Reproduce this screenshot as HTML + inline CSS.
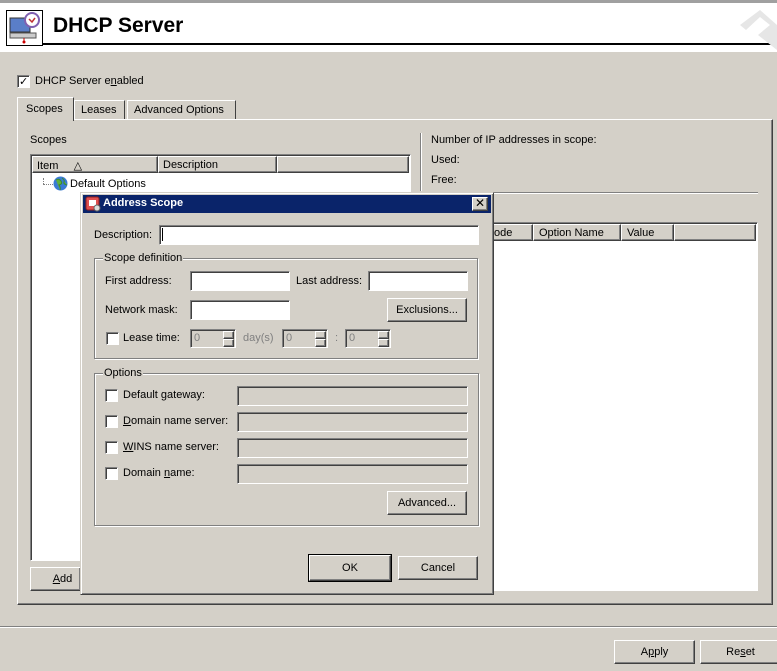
<!DOCTYPE html>
<html><head><meta charset="utf-8"><style>
*{box-sizing:border-box;margin:0;padding:0}
body{width:777px;height:671px;background:#d4d0c8;font-family:"Liberation Sans","DejaVu Sans",sans-serif;font-size:11px;color:#000;position:relative;overflow:hidden}
.a{position:absolute}
.in{background:#fff;border:1px solid;border-color:#808080 #fff #fff #808080;box-shadow:inset 1px 1px 0 #404040}
.dis{background:#d4d0c8}
.out{border:1px solid;border-color:#fff #404040 #404040 #fff;box-shadow:inset -1px -1px 0 #808080;background:#d4d0c8;text-align:center}
.grp{border:1px solid #808080;box-shadow:1px 1px 0 #fff, inset 1px 1px 0 #fff}
.lg{position:absolute;top:-7px;left:8px;background:#d4d0c8;padding:0 1px}
.cb{position:absolute;width:13px;height:13px;background:#fff;border:1px solid;border-color:#808080 #fff #fff #808080;box-shadow:inset 1px 1px 0 #404040}
.etch{border-top:1px solid #808080;border-bottom:1px solid #fff}
u{text-decoration:underline}
</style></head><body>
<!-- header -->
<div class="a" style="left:0;top:0;width:777px;height:3px;background:#a0a0a0"></div>
<div class="a" style="left:0;top:3px;width:777px;height:49px;background:#fff"></div>
<div class="a" style="left:42px;top:43px;width:733px;height:2px;background:#000"></div>
<div class="a" style="left:6px;top:10px;width:37px;height:36px;border:1px solid #000;background:#fff"></div>
<svg class="a" style="left:8px;top:12px" width="34" height="32"><rect x="2" y="6" width="20" height="14" fill="#5a7ec8" stroke="#333"/><rect x="2" y="21" width="26" height="5" fill="#ccc" stroke="#555"/><circle cx="24" cy="8" r="7" fill="#fff" stroke="#8060b0" stroke-width="2"/><path d="M21 7l3 3 3-4" stroke="#c03030" fill="none" stroke-width="1.5"/><line x1="16" y1="26" x2="16" y2="30" stroke="#c00"/><circle cx="16" cy="30" r="1.5" fill="#c00"/></svg>
<div class="a" style="left:53px;top:14px;font-size:21px;font-weight:bold">DHCP Server</div>
<svg class="a" style="left:740px;top:5px" width="37" height="45"><path d="M0 20L20 5 37 20 37 45 18 30 30 20 20 12 6 25z" fill="#e6e6e6"/></svg>
<!-- checkbox enabled -->
<div class="cb" style="left:17px;top:75px"></div>
<div class="a" style="left:19px;top:75px;font-size:11px;font-weight:bold">✓</div>
<div class="a" style="left:35px;top:75px">DHCP Server e<u>n</u>abled</div>
<!-- tabs -->
<div class="a" style="left:17px;top:119px;width:756px;height:486px;border:1px solid;border-color:#fff #404040 #404040 #fff;box-shadow:inset -1px -1px 0 #808080"></div>
<div class="a" style="left:17px;top:97px;width:57px;height:24px;border:1px solid;border-color:#fff #404040 transparent #fff;border-bottom:none;background:#d4d0c8;padding:5px 0 0 8px">Scopes</div>
<div class="a" style="left:74px;top:100px;width:51px;height:19px;border:1px solid;border-color:#fff #404040 transparent #fff;border-bottom:none;padding:3px 0 0 6px">Leases</div>
<div class="a" style="left:127px;top:100px;width:109px;height:19px;border:1px solid;border-color:#fff #404040 transparent #fff;border-bottom:none;padding:3px 0 0 6px">Advanced Options</div>
<div class="a" style="left:30px;top:134px">Scopes</div>
<div class="a in" style="left:30px;top:154px;width:381px;height:407px"></div>
<div class="a out" style="left:32px;top:156px;width:126px;height:17px;text-align:left;padding:2px 0 0 4px">Item &nbsp;&nbsp;&nbsp;&nbsp;&#9651;</div>
<div class="a out" style="left:158px;top:156px;width:119px;height:17px;text-align:left;padding:2px 0 0 4px">Description</div>
<div class="a out" style="left:277px;top:156px;width:132px;height:17px"></div>
<div class="a" style="left:43px;top:178px;width:1px;height:6px;border-left:1px dotted #808080"></div>
<div class="a" style="left:43px;top:184px;width:10px;border-top:1px dotted #808080"></div>
<svg class="a" style="left:53px;top:176px" width="15" height="15"><circle cx="7.5" cy="7.5" r="7" fill="#3a7bd5"/><path d="M3 4q3-2 5 1t-2 4q2 3 1 5M9 2q3 2 2 4t3 3" fill="#5fb040" stroke="#3a8a30"/></svg>
<div class="a" style="left:70px;top:178px">Default Options</div>
<div class="a out" style="left:30px;top:567px;width:51px;height:24px;padding-top:5px;padding-left:14px"><u>A</u>dd</div>
<!-- right side -->
<div class="a" style="left:420px;top:133px;width:2px;height:58px;border-left:1px solid #808080;border-right:1px solid #fff"></div>
<div class="a" style="left:431px;top:134px">Number of IP addresses in scope:</div>
<div class="a" style="left:431px;top:154px">Used:</div>
<div class="a" style="left:431px;top:174px">Free:</div>
<div class="a etch" style="left:425px;top:192px;width:333px;height:2px"></div>
<div class="a in" style="left:480px;top:222px;width:278px;height:369px"></div>
<div class="a out" style="left:482px;top:224px;width:51px;height:17px;text-align:left;padding:2px 0 0 11px">ode</div>
<div class="a out" style="left:533px;top:224px;width:88px;height:17px;text-align:left;padding:2px 0 0 5px">Option Name</div>
<div class="a out" style="left:621px;top:224px;width:53px;height:17px;text-align:left;padding:2px 0 0 5px">Value</div>
<div class="a out" style="left:674px;top:224px;width:82px;height:17px"></div>
<!-- bottom -->
<div class="a etch" style="left:0;top:626px;width:777px;height:2px"></div>
<div class="a out" style="left:614px;top:640px;width:81px;height:24px;padding-top:5px">A<u>p</u>ply</div>
<div class="a out" style="left:700px;top:640px;width:81px;height:24px;padding-top:5px">Re<u>s</u>et</div>
<!-- dialog -->
<div class="a" style="left:80px;top:192px;width:414px;height:403px;border:1px solid;border-color:#d4d0c8 #404040 #404040 #d4d0c8;box-shadow:inset 1px 1px 0 #fff,inset -1px -1px 0 #808080;background:#d4d0c8"></div>
<div class="a" style="left:83px;top:195px;width:408px;height:18px;background:#0a246a"></div>
<svg class="a" style="left:85px;top:196px" width="16" height="16"><rect x="1" y="1" width="13" height="13" rx="2" fill="#e05050" stroke="#902020"/><rect x="4" y="4" width="7" height="6" fill="#fff"/><circle cx="12" cy="12" r="3" fill="#ddd" stroke="#666"/></svg>
<div class="a" style="left:103px;top:197px;color:#fff;font-weight:bold;font-size:11px">Address Scope</div>
<div class="a out" style="left:472px;top:197px;width:16px;height:14px;font-size:12px;line-height:11px;font-weight:bold">✕</div>
<div class="a" style="left:94px;top:229px">Description:</div>
<div class="a in" style="left:159px;top:225px;width:320px;height:20px"></div>
<div class="a" style="left:162px;top:228px;width:1px;height:13px;background:#000"></div>
<div class="a grp" style="left:94px;top:258px;width:384px;height:101px"><span class="lg">Scope definition</span></div>
<div class="a" style="left:105px;top:275px">First address:</div>
<div class="a in" style="left:190px;top:271px;width:100px;height:20px"></div>
<div class="a" style="left:296px;top:275px">Last address:</div>
<div class="a in" style="left:368px;top:271px;width:100px;height:20px"></div>
<div class="a" style="left:105px;top:304px">Network mask:</div>
<div class="a in" style="left:190px;top:300px;width:100px;height:20px"></div>
<div class="a out" style="left:387px;top:298px;width:80px;height:24px;padding-top:5px">Exclusions...</div>
<div class="cb" style="left:106px;top:332px"></div>
<div class="a" style="left:123px;top:332px">Lease time:</div>
<div class="a in dis" style="left:190px;top:329px;width:46px;height:19px;color:#808080;padding:2px 0 0 3px">0</div>
<div class="a" style="left:243px;top:332px;color:#808080">day(s)</div>
<div class="a in dis" style="left:282px;top:329px;width:46px;height:19px;color:#808080;padding:2px 0 0 3px">0</div>
<div class="a" style="left:335px;top:332px;color:#808080">:</div>
<div class="a in dis" style="left:345px;top:329px;width:46px;height:19px;color:#808080;padding:2px 0 0 3px">0</div>
<div class="a out" style="left:223px;top:331px;width:11px;height:8px"></div><div class="a out" style="left:223px;top:339px;width:11px;height:8px"></div>
<div class="a out" style="left:315px;top:331px;width:11px;height:8px"></div><div class="a out" style="left:315px;top:339px;width:11px;height:8px"></div>
<div class="a out" style="left:378px;top:331px;width:11px;height:8px"></div><div class="a out" style="left:378px;top:339px;width:11px;height:8px"></div>
<div class="a grp" style="left:94px;top:373px;width:385px;height:153px"><span class="lg">Options</span></div>
<div class="cb" style="left:105px;top:389px"></div><div class="a" style="left:123px;top:389px">Default <u>g</u>ateway:</div>
<div class="a in dis" style="left:237px;top:386px;width:231px;height:20px"></div>
<div class="cb" style="left:105px;top:415px"></div><div class="a" style="left:123px;top:415px"><u>D</u>omain name server:</div>
<div class="a in dis" style="left:237px;top:412px;width:231px;height:20px"></div>
<div class="cb" style="left:105px;top:441px"></div><div class="a" style="left:123px;top:441px"><u>W</u>INS name server:</div>
<div class="a in dis" style="left:237px;top:438px;width:231px;height:20px"></div>
<div class="cb" style="left:105px;top:467px"></div><div class="a" style="left:123px;top:467px">Domain <u>n</u>ame:</div>
<div class="a in dis" style="left:237px;top:464px;width:231px;height:20px"></div>
<div class="a out" style="left:387px;top:491px;width:80px;height:24px;padding-top:5px">Advanced...</div>
<div class="a out" style="left:309px;top:555px;width:82px;height:26px;padding-top:6px;outline:1px solid #000">OK</div>
<div class="a out" style="left:398px;top:556px;width:80px;height:24px;padding-top:5px">Cancel</div>
</body></html>
